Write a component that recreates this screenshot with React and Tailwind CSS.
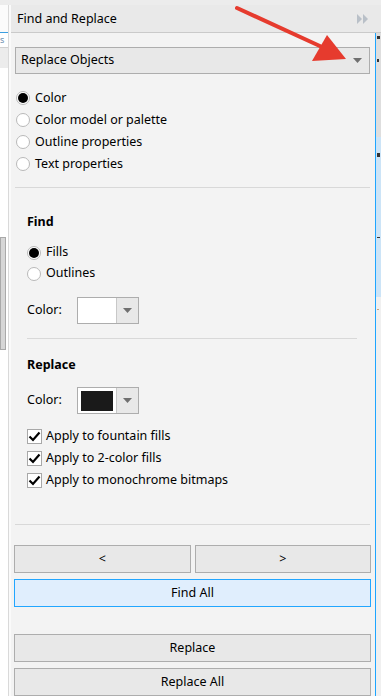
import React from "react";

const Caret = () => (
  <svg width="9" height="5" viewBox="0 0 9 5">
    <polygon points="0,0 9,0 4.5,5" fill="#707070" />
  </svg>
);

const Radio = ({ checked, label, h = "h-[22px]" }) => (
  <div className={`flex items-center ${h} gap-[5px]`}>
    <span className="w-[14px] h-[14px] rounded-full border border-[#b9b9b9] bg-white flex items-center justify-center shrink-0">
      {checked && <span className="w-[10px] h-[10px] rounded-full bg-black" />}
    </span>
    <span>{label}</span>
  </div>
);

const Check = ({ label }) => (
  <div className="flex items-center h-[22px] gap-[4px]">
    <span className="w-[15px] h-[15px] border border-[#a8a8a8] bg-white flex items-center justify-center shrink-0">
      <svg width="13" height="13" viewBox="0 0 13 13">
        <path d="M1.5 6.5 L5 10 L11.5 2.5" fill="none" stroke="#000" strokeWidth="2.2" />
      </svg>
    </span>
    <span>{label}</span>
  </div>
);

const Swatch = ({ dark }) => (
  <div className="flex h-[27px] w-[62px] border border-[#adadad]">
    <div className="w-[38px] bg-white flex items-center justify-center">
      {dark && <div className="w-[32px] h-[20px] bg-[#1a1a1a]" />}
    </div>
    <div className="flex-1 bg-[#e8e8e8] border-l border-[#c8c8c8] flex items-center justify-center">
      <Caret />
    </div>
  </div>
);

const Button = ({ children, className = "" }) => (
  <div
    className={`h-[28px] flex items-center justify-center border border-[#adadad] bg-[#e8e8e8] ${className}`}
  >
    {children}
  </div>
);

export default function App() {
  return (
    <div className="relative w-[381px] h-[696px] overflow-hidden flex flex-col bg-[#f0f0f0] text-[12.5px] text-black font-['Noto_Sans',sans-serif]">
      <div className="h-[5px] bg-[#ececec] shrink-0" />
      <div className="flex flex-1">
        {/* left neighbour panel */}
        <div className="w-[8px] flex flex-col bg-white">
          <div className="h-[27px] bg-[#fbfbfb]" />
          <div className="h-px bg-[#3c9fe0]" />
          <div className="h-[14px] text-[9px] leading-[14px] text-[#6b8fb0] overflow-hidden">s</div>
          <div className="h-px bg-[#cfcfcf]" />
          <div className="h-[20px] bg-[#ececec]" />
          <div className="h-[169px]" />
          <div className="h-[113px] w-[6px] bg-[#d6d6d6] border border-[#a9a9a9]" />
        </div>
        <div className="w-px bg-[#d9d9d9]" />
        <div className="w-[2px] bg-[#fafafa]" />

        <div className="flex-1 flex flex-col">
          {/* header */}
          <div className="h-[28px] shrink-0 flex items-center justify-between pl-[6px] pr-[13px] pt-px bg-[#e9e9e9] border-b border-[#cacaca]">
            <span>Find and Replace</span>
            <svg width="11" height="10" viewBox="0 0 11 10">
              <polygon points="0,0 5,5 0,10" fill="#b9c0c8" />
              <polygon points="6,0 11,5 6,10" fill="#b9c0c8" />
            </svg>
          </div>

          <div className="flex flex-1">
            {/* panel body */}
            <div className="w-[364px] bg-[#f3f3f3] flex flex-col">
              <div className="mt-[14px] ml-[4px] mr-[5px] h-[27px] flex items-center justify-between pl-[5px] pr-[7px] border border-[#adadad] bg-[#e8e8e8]">
                <span>Replace Objects</span>
                <Caret />
              </div>

              <div className="mt-[13px] ml-[5px] flex flex-col">
                <Radio checked label="Color" />
                <Radio label="Color model or palette" />
                <Radio label="Outline properties" />
                <Radio label="Text properties" />
              </div>

              <div className="mt-[12px] ml-[4px] mr-[5px] h-px bg-[#d8d8d8]" />

              <div className="pl-[16px] pr-[18px] flex flex-col">
                <div className="mt-[24px] h-[20px] leading-[20px] font-bold">Find</div>
                <div className="mt-[10px] flex flex-col">
                  <Radio checked label="Fills" h="h-[21px]" />
                  <Radio label="Outlines" h="h-[21px]" />
                </div>
                <div className="mt-[13px] flex items-center gap-[14px]">
                  <span className="w-[36px]">Color:</span>
                  <Swatch />
                </div>

                <div className="mt-[14px] h-px bg-[#d8d8d8]" />

                <div className="mt-[16px] h-[20px] leading-[20px] font-bold">Replace</div>
                <div className="mt-[12px] flex items-center gap-[14px]">
                  <span className="w-[36px]">Color:</span>
                  <Swatch dark />
                </div>
                <div className="mt-[11px] flex flex-col">
                  <Check label="Apply to fountain fills" />
                  <Check label="Apply to 2-color fills" />
                  <Check label="Apply to monochrome bitmaps" />
                </div>
              </div>

              <div className="mt-[33px] ml-[4px] mr-[5px] h-px bg-[#d8d8d8]" />

              <div className="pl-[3px] pr-[4px] flex flex-col">
                <div className="mt-[20px] flex gap-[4px]">
                  <Button className="flex-1">&lt;</Button>
                  <Button className="flex-1">&gt;</Button>
                </div>
                <Button className="mt-[6px] !bg-[#e0eefd] !border-[#22a6ff]">Find All</Button>
                <Button className="mt-[27px]">Replace</Button>
                <Button className="mt-[6px]">Replace All</Button>
              </div>
            </div>

            <div className="w-px bg-[#1ea5ff]" />

            {/* right neighbour strip */}
            <div className="flex-1 flex flex-col bg-[#f0f0f0]">
              <div className="h-[104px] bg-[#dedede] flex flex-col pt-[3px] pl-[1px] gap-[20px]">
                <div className="w-[3px] h-[3px] bg-[#333]" />
                <div className="w-[2px] h-[3px] bg-[#333]" />
              </div>
              <div className="h-[160px] bg-[#cce4f7] flex flex-col pt-[16px] pl-[1px] gap-[80px]">
                <div className="w-[3px] h-[4px] bg-[#333]" />
                <div className="w-[3px] h-px bg-[#333]" />
              </div>
              <div className="mt-[12px] ml-[1px] w-[2px] h-px bg-[#c9a27a]" />
            </div>
          </div>
        </div>
      </div>

      {/* red annotation arrow */}
      <svg className="absolute inset-0 pointer-events-none" width="381" height="696" viewBox="0 0 381 696">
        <line x1="237" y1="8" x2="322" y2="47" stroke="#e63b2e" strokeWidth="4" strokeLinecap="round" />
        <polygon points="327,35 312,61 346,59" fill="#e63b2e" />
      </svg>
    </div>
  );
}
